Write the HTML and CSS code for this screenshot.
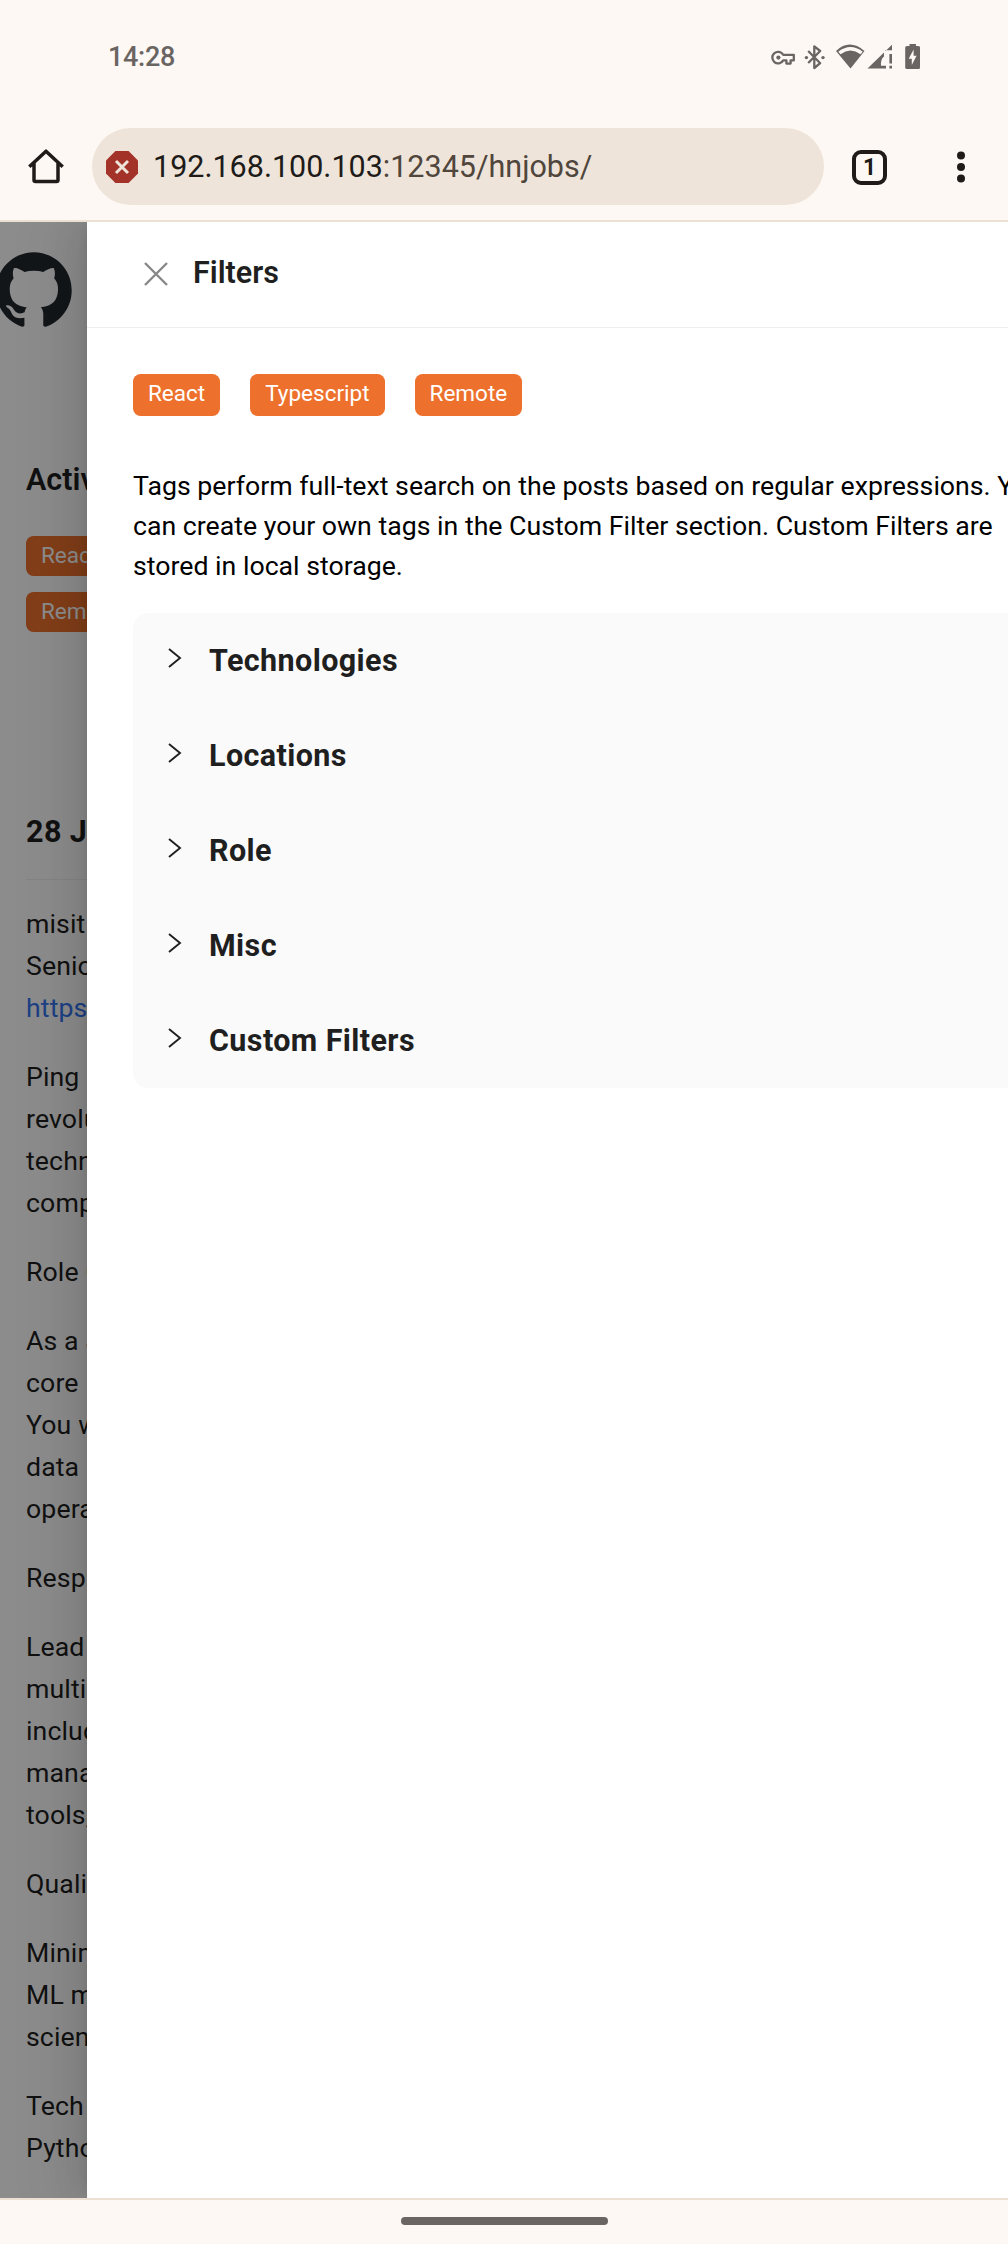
FILE: index.html
```html
<!DOCTYPE html>
<html lang="en">
<head>
<meta charset="utf-8">
<title>HN Jobs</title>
<link rel="stylesheet" href="styles.css">
</head>
<body>
<header class="status">
  <span class="clock">14:28</span>
  <svg class="status-icons" width="154" height="30" viewBox="0 0 154 30" fill="#6a6562">
    <g fill="none" stroke="#6a6562" stroke-width="2.3" stroke-linejoin="round">
      <path d="M13.2 10.8A5.8 5.8 0 1 0 13.2 16.4H16.4V19.6H20.6V16.4H23.8V10.8Z"/>
      <path d="M38.2 7L50.2 19.200L44.3 24V2.400L50.2 7L38.2 19"/>
    </g>
    <circle cx="8.4" cy="13.6" r="2.1"/>
    <circle cx="36.4" cy="13.6" r="1.7"/><circle cx="53" cy="13.6" r="1.7"/>
    <path d="M66 7Q79.5-5.800 94.5 7L80.500 24.500Z"/>
    <path d="M68.300 7.700Q80.500-1.500 92.700 7.700L90.500 10.200Q80.500 2.800 70.500 10.200Z" fill="#fdf8f4"/>
    <path d="M97.500 24.500L114 8.500V12.500Q110.500 15 111 21.800H116V24.500ZM115.300 7.300L122 .700V6.300H115.300ZM119.400 10H122V19.500H119.400ZM119.400 21.800H122V24.500H119.400Z"/>
    <path d="M137 2H139.500V0H146V2H148.500Q150 2 150 3.500V23.500Q150 25 148.500 25H137Q135.200 25 135.200 23.500V3.500Q135.200 2 137 2Z"/>
    <path d="M143.600 5.500L138.700 14.700H141.800V21L146.600 11.800H143.600Z" fill="#fdf8f4"/>
  </svg>
</header>
<nav class="toolbar">
  <svg class="home" width="36" height="36" viewBox="0 0 36 36" fill="none" stroke="#201b18" stroke-width="3.500"><path d="M1.300 17.800L18 2.200L34.700 17.800M6 14V31Q6 32.500 7.500 32.500H28.500Q30 32.500 30 31V14" stroke-linejoin="round"/></svg>
  <div class="address">
    <svg width="32" height="32" viewBox="0 0 32 32"><path d="M9.400 0H22.600L32 9.400V22.600L22.600 32H9.400L0 22.600V9.400Z" fill="#a33228"/><path d="M10 10L22 22M22 10L10 22" stroke="#eee4da" stroke-width="3"/></svg>
    <span class="url"><b>192.168.100.103</b>:12345/hnjobs/</span>
  </div>
  <span class="tabs">1</span>
  <svg class="more" width="8" height="32" viewBox="0 0 8 32" fill="#201b18"><circle cx="4" cy="4.500" r="4"/><circle cx="4" cy="16" r="4"/><circle cx="4" cy="27.500" r="4"/></svg>
</nav>
<main class="viewport">
  <div class="page">
    <svg class="github" width="76" height="75" viewBox="0 0 98 96"><path fill-rule="evenodd" clip-rule="evenodd" fill="#24292f" d="M48.854 0C21.839 0 0 22 0 49.217c0 21.756 13.993 40.172 33.405 46.690 2.427.490 3.316-1.059 3.316-2.362 0-1.141-.080-5.052-.080-9.127-13.590 2.934-16.420-5.867-16.420-5.867-2.184-5.704-5.420-7.170-5.420-7.170-4.448-3.015.324-3.015.324-3.015 4.934.326 7.523 5.052 7.523 5.052 4.367 7.496 11.404 5.378 14.235 4.074.404-3.178 1.699-5.378 3.074-6.600-10.839-1.141-22.243-5.378-22.243-24.283 0-5.378 1.940-9.778 5.014-13.200-.485-1.222-2.184-6.275.486-13.038 0 0 4.125-1.304 13.426 5.052a46.970 46.970 0 0 1 12.214-1.630c4.125 0 8.330.571 12.213 1.630 9.302-6.356 13.427-5.052 13.427-5.052 2.670 6.763.970 11.816.485 13.038 3.155 3.422 5.015 7.822 5.015 13.200 0 18.905-11.404 23.060-22.324 24.283 1.780 1.548 3.316 4.481 3.316 9.126 0 6.600-.080 11.897-.080 13.526 0 1.304.890 2.853 3.316 2.364 19.412-6.520 33.405-24.935 33.405-46.691C97.707 22 75.788 0 48.854 0z"/></svg>
    <h2 class="heading active">Active</h2>
    <div class="page-tags"><span class="tag">React</span><span class="tag">Remote</span></div>
    <h2 class="heading jobs">28 Jobs</h2>
    <article class="post">
      <p>misit<br>Senior<br><a>https://</a></p>
      <p>Ping<br>revolu<br>techn<br>comp</p>
      <p>Role O</p>
      <p>As a S<br>core<br>You w<br>data<br>opera</p>
      <p>Resp</p>
      <p>Lead<br>multi<br>includ<br>mana<br>tools,</p>
      <p>Quali</p>
      <p>Minim<br>ML mo<br>scienc</p>
      <p>Tech<br>Pytho</p>
    </article>
  </div>
  <div class="mask"></div>
  <aside class="drawer">
    <div class="drawer-head">
      <svg width="24" height="24" viewBox="0 0 24 24" fill="none" stroke="#888" stroke-width="2.400"><path d="M1 1L23 23M23 1L1 23"/></svg>
      <h2 class="heading">Filters</h2>
    </div>
    <div class="drawer-body">
      <div class="tags"><span class="tag">React</span><span class="tag">Typescript</span><span class="tag">Remote</span></div>
      <p class="intro">Tags perform full-text search on the posts based on regular expressions. You<br>can create your own tags in the Custom Filter section. Custom Filters are<br>stored in local storage.</p>
      <ul class="panels">
        <li><svg class="arrow" viewBox="0 0 14 20"><path d="M1 1L12 10L1 19"/></svg>Technologies</li>
        <li><svg class="arrow" viewBox="0 0 14 20"><path d="M1 1L12 10L1 19"/></svg>Locations</li>
        <li><svg class="arrow" viewBox="0 0 14 20"><path d="M1 1L12 10L1 19"/></svg>Role</li>
        <li><svg class="arrow" viewBox="0 0 14 20"><path d="M1 1L12 10L1 19"/></svg>Misc</li>
        <li><svg class="arrow" viewBox="0 0 14 20"><path d="M1 1L12 10L1 19"/></svg>Custom Filters</li>
      </ul>
    </div>
  </aside>
</main>
<footer class="gesture"><span></span></footer>
</body>
</html>
```
FILE: styles.css
```css
* { box-sizing: border-box; }
body { margin: 0; width: 1008px; height: 2244px; overflow: hidden; display: flex; flex-direction: column; background: #fdf8f4; font-family: Roboto, "Liberation Sans", sans-serif; color: #1f1f1f; }
h2, p, ul { margin: 0; padding: 0; }
svg { display: block; flex: none; }

.status { height: 114px; flex: none; display: flex; justify-content: space-between; align-items: flex-start; padding: 44px 86px 0 108px; color: #6a6562; }
.clock { font-size: 27px; line-height: 27px; font-weight: 500; letter-spacing: -.3px; }
.status-icons { margin-right: -2px; }

.toolbar { height: 108px; flex: none; display: flex; align-items: center; border-bottom: 2px solid #ece0d0; padding-left: 28px; }
.address { width: 732px; height: 77px; border-radius: 39px; margin: 0 0 1px 28px; background: #eee4da; display: flex; align-items: center; gap: 15px; padding-left: 14px; }
.url { font-size: 30.5px; color: #50463c; }
.url b { font-weight: 400; color: #201b18; }
.tabs { width: 35px; height: 35px; margin-left: 28px; border: 4px solid #201b18; border-radius: 9px; text-align: center; font-size: 23px; line-height: 28px; font-weight: 700; color: #201b18; }
.more { margin-left: 70px; }

.viewport { position: relative; flex: 1; min-height: 0; overflow: hidden; display: flex; justify-content: flex-end; background: #fff; }
.page { position: absolute; inset: 0; padding: 30px 26px 0; }
.github { margin-left: -30px; }
.heading { font-size: 30.5px; line-height: 46px; font-weight: 600; }
.active { margin-top: 130px; }
.page-tags { display: flex; flex-direction: column; align-items: flex-start; gap: 16px; margin-top: 33px; }
.tag { height: 40px; border-radius: 7.600px; padding: 0 15px; background: #ed712d; color: #fff; font-size: 22.500px; line-height: 39px; }
.jobs { margin-top: 177px; padding-bottom: 24px; border-bottom: 1px solid #f0f0f0; font-weight: 700; letter-spacing: .4px; }
.post { margin-top: 23px; font-size: 26.700px; line-height: 42px; letter-spacing: .1px; }
.post p { margin-bottom: 27px; }
.post a { color: #3576f2; }
.mask { position: absolute; inset: 0; background: rgba(0, 0, 0, .45); }

.drawer { position: relative; width: 921px; height: 100%; background: #fff; box-shadow: -11px 0 31px rgba(0, 0, 0, .08), -6px 0 11px -8px rgba(0, 0, 0, .12), -17px 0 53px 15px rgba(0, 0, 0, .05); }
.drawer-head { height: 106px; display: flex; align-items: center; gap: 25px; padding: 0 0 2px 57px; border-bottom: 1px solid #efefef; }
.drawer-head .heading { margin-top: -2px; }
.drawer-body { padding: 46px 0 0 46px; }
.tags { display: flex; gap: 30px; }
.tags .tag { height: 42px; line-height: 39px; }
.intro { margin-top: 50px; font-size: 26.700px; line-height: 40px; color: #000; white-space: nowrap; }
.panels { margin-top: 27px; height: 475px; border-radius: 15px 0 0 15px; background: #fafafa; list-style: none; }
.panels li { height: 95px; display: flex; align-items: center; gap: 27px; padding-left: 35px; font-size: 30.500px; font-weight: 700; letter-spacing: .4px; }
.arrow { width: 14px; height: 20px; margin-top: -6px; fill: none; stroke: #1f1f1f; stroke-width: 1.900; }

.gesture { height: 46px; flex: none; border-top: 2px solid #ece0d0; display: flex; justify-content: center; align-items: center; padding-bottom: 2px; }
.gesture span { width: 207px; height: 8px; border-radius: 4px; background: #6a6562; }
```
